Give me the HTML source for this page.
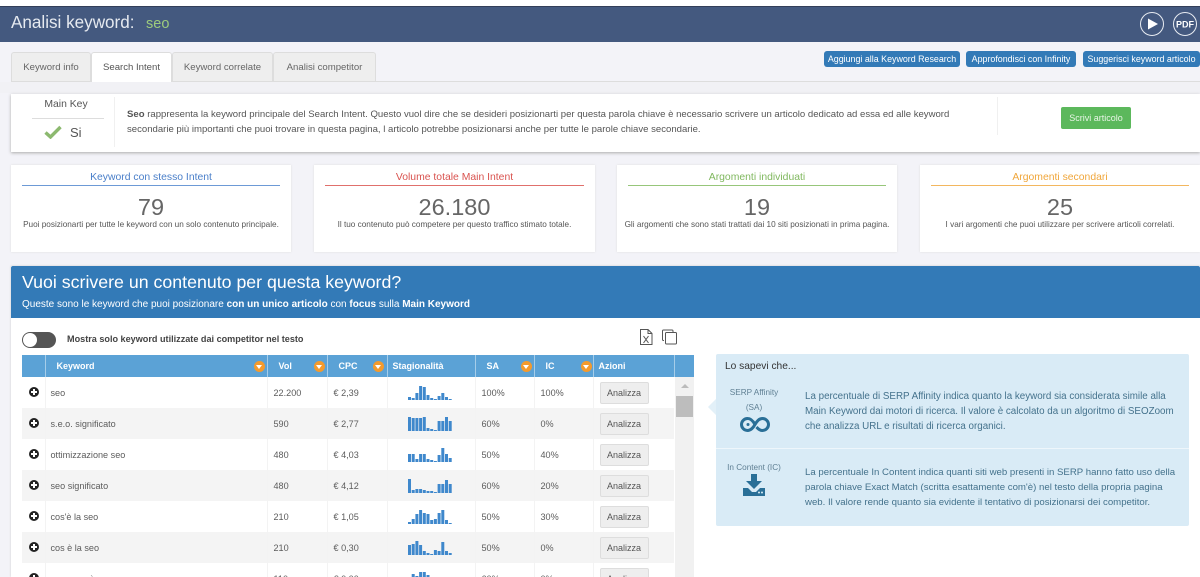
<!DOCTYPE html>
<html lang="it"><head><meta charset="utf-8"><title>Analisi keyword</title>
<style>
html,body{margin:0;padding:0;width:1200px;height:577px;overflow:hidden;background:#f3f3f8}
body{position:relative;font-family:"Liberation Sans",sans-serif;color:#555}
.a{position:absolute;white-space:nowrap}
.tab{position:absolute;top:52px;height:29px;line-height:30px;text-align:center;font-size:9.6px;color:#666;background:#eee;border:1px solid #ddd;border-bottom:0;box-sizing:border-box;border-radius:3px 3px 0 0}
.btn{position:absolute;top:51px;height:16px;line-height:16px;text-align:center;font-size:8.9px;color:#fff;background:#337ab7;border-radius:3px}
.card{position:absolute;top:165px;height:87px;width:280px;background:#fff;box-shadow:0 0 2px #ddd;text-align:center}
.card .t{position:absolute;left:11px;right:11px;top:6px;height:14px;line-height:13px;font-size:10.4px}
.card .l{position:absolute;left:11px;right:11px;top:20px;height:1px}
.card .n{position:absolute;left:0;right:0;top:29px;font-size:23.5px;line-height:26px;color:#666}
.card .d{position:absolute;left:0;right:0;top:54px;font-size:8.2px;line-height:11px;color:#555}
table{position:absolute;left:22px;top:355px;width:652px;border-collapse:collapse;table-layout:fixed;font-size:9.1px;color:#5c5c5c}
th{height:22px;padding:0 0 0 11px;background:#5ba2d6;color:#fff;text-align:left;font-size:9px;font-weight:bold;border-left:1px solid #a6cde9;box-sizing:border-box;position:relative}
th:first-child{border-left:0}
th i{position:absolute;top:6px;width:11px;height:11px;border-radius:50%;background:#f39a2d}
th i:after{content:"";position:absolute;left:2.5px;top:4px;border:3px solid transparent;border-top:4px solid #fff;border-bottom:0}
td{height:31px;padding:0 0 0 6px;box-sizing:border-box;border-left:1px solid #f3f3f3;white-space:nowrap}
td:first-child{border-left:0;padding:0 0 0 7px}
td.k{padding-left:5px}
td.g{padding-left:20px}
tr.s td{background:#f4f4f4}
td svg{display:block;transform:translateY(-1px)}
.an{display:block;width:49px;height:22px;line-height:21px;text-align:center;font-size:9px;color:#555;background:#eee;border:1px solid #ddd;border-radius:2px;box-sizing:border-box}
.pl{display:block;width:10px;height:10px;border-radius:50%;background:#222;position:relative;margin-top:-2px}
.pl:after{content:"";position:absolute;left:2px;top:4px;width:6px;height:2px;background:#fff}
.pl:before{content:"";position:absolute;left:4px;top:2px;width:2px;height:6px;background:#fff}
</style></head><body>
<div class="a" style="left:0;top:6px;width:1200px;height:36px;background:#44597f;border-top:1px solid #333f59;box-sizing:border-box"></div>
<div class="a" style="left:0;top:0;width:1200px;height:6px;background:#fff"></div>
<div class="a" style="left:11px;top:11px;font-size:17.1px;line-height:24px;color:#e6eaf0">Analisi keyword:</div>
<div class="a" style="left:146px;top:15px;font-size:14.5px;line-height:18px;color:#9ccb7d">seo</div>
<svg class="a" style="left:1139px;top:11px" width="60" height="26" viewBox="0 0 60 26">
<circle cx="13" cy="13" r="11.5" fill="none" stroke="#e8ecf2" stroke-width="1"/><path d="M9 7.5L19 13 9 18.5Z" fill="#fff"/>
<circle cx="46" cy="13" r="11.5" fill="none" stroke="#e8ecf2" stroke-width="1"/><text x="46" y="16.5" text-anchor="middle" font-family="Liberation Sans" font-weight="bold" font-size="9" fill="#fff">PDF</text></svg>

<div class="a" style="left:11px;top:81px;width:1189px;height:1px;background:#ddd"></div>
<div class="a" style="left:0;top:82px;width:1200px;height:11px;background:#f1f1f5"></div>
<div class="tab" style="left:11px;width:80px">Keyword info</div>
<div class="tab" style="left:91px;width:81px;background:#fff;height:30px;color:#555">Search Intent</div>
<div class="tab" style="left:172px;width:101px">Keyword correlate</div>
<div class="tab" style="left:273px;width:103px">Analisi competitor</div>
<div class="btn" style="left:824px;width:136px">Aggiungi alla Keyword Research</div>
<div class="btn" style="left:966px;width:110px">Approfondisci con Infinity</div>
<div class="btn" style="left:1083px;width:117px">Suggerisci keyword articolo</div>

<div class="a" style="left:11px;top:94px;width:1189px;height:58px;background:#fff;box-shadow:0 1px 3px #aaa"></div>
<div class="a" style="left:11px;top:98px;width:110px;text-align:center;font-size:10.4px;line-height:14px;color:#555">Main Key</div>
<div class="a" style="left:32px;top:118px;width:72px;height:1px;background:#ddd"></div>
<svg class="a" style="left:44px;top:125px" width="18" height="14" viewBox="0 0 18 14"><path d="M1.5 7.5L6.5 12 16.5 2" fill="none" stroke="#8cb96f" stroke-width="3.4"/></svg>
<div class="a" style="left:70px;top:125px;font-size:13px;line-height:16px;color:#555">Si</div>
<div class="a" style="left:114px;top:97px;width:1px;height:50px;background:#f0f0f0"></div>
<div class="a" style="left:127px;top:107px;font-size:9.57px;line-height:15px;color:#555"><b>Seo</b> rappresenta la keyword principale del Search Intent. Questo vuol dire che se desideri posizionarti per questa parola chiave è necessario scrivere un articolo dedicato ad essa ed alle keyword<br>secondarie più importanti che puoi trovare in questa pagina, l articolo potrebbe posizionarsi anche per tutte le parole chiave secondarie.</div>
<div class="a" style="left:997px;top:97px;width:1px;height:38px;background:#f0f0f0"></div>
<div class="a" style="left:1061px;top:107px;width:70px;height:22px;line-height:22px;text-align:center;font-size:9px;color:#e8f5e6;background:#5cb85c;border-radius:2px">Scrivi articolo</div>

<div class="card" style="left:11px"><div class="t" style="color:#4a7fc9">Keyword con stesso Intent</div><div class="l" style="background:#6d9ad6"></div><div class="n">79</div><div class="d">Puoi posizionarti per tutte le keyword con un solo contenuto principale.</div></div>
<div class="card" style="left:314px;width:281px"><div class="t" style="color:#d9534f">Volume totale Main Intent</div><div class="l" style="background:#e0706c"></div><div class="n">26.180</div><div class="d">Il tuo contenuto può competere per questo traffico stimato totale.</div></div>
<div class="card" style="left:617px"><div class="t" style="color:#80b85f">Argomenti individuati</div><div class="l" style="background:#97c67a"></div><div class="n">19</div><div class="d">Gli argomenti che sono stati trattati dai 10 siti posizionati in prima pagina.</div></div>
<div class="card" style="left:920px"><div class="t" style="color:#f0a63a">Argomenti secondari</div><div class="l" style="background:#f3b75f"></div><div class="n">25</div><div class="d">I vari argomenti che puoi utilizzare per scrivere articoli correlati.</div></div>

<div class="a" style="left:11px;top:266px;width:1189px;height:311px;background:#fff;box-shadow:0 0 2px #ccc"></div>
<div class="a" style="left:11px;top:266px;width:1189px;height:52px;background:#337ab7;border-radius:2px 2px 0 0"></div>
<div class="a" style="left:22px;top:271px;font-size:17.75px;line-height:22px;color:#fff">Vuoi scrivere un contenuto per questa keyword?</div>
<div class="a" style="left:22px;top:298px;font-size:10px;line-height:14px;color:#fff">Queste sono le keyword che puoi posizionare <b>con un unico articolo</b> con <b>focus</b> sulla <b>Main Keyword</b></div>

<div class="a" style="left:22px;top:332px;width:34px;height:16px;border-radius:8px;background:#555"></div>
<div class="a" style="left:23px;top:333px;width:14px;height:14px;border-radius:50%;background:#fff"></div>
<div class="a" style="left:67px;top:333px;font-size:9.1px;line-height:13px;font-weight:bold;color:#444">Mostra solo keyword utilizzate dai competitor nel testo</div>
<svg class="a" style="left:639px;top:328px" width="40" height="18" viewBox="0 0 40 18" fill="none" stroke="#555" stroke-width="1">
<path d="M1.5 1.5H9L13 5.5V16.5H1.5Z"/><path d="M9 1.5V5.5H13"/><path d="M4.5 8L9.5 15M9.5 8L4.5 15"/>
<path d="M25 12.5H24.500Q23.500 12.500 23.500 11.500V3Q23.500 2 24.500 2H33Q34 2 34 3V4"/><rect x="26.500" y="4.500" width="11" height="11.500" rx="1"/></svg>

<table>
<colgroup><col style="width:23px"><col style="width:222px"><col style="width:60px"><col style="width:60px"><col style="width:88px"><col style="width:59px"><col style="width:59px"><col style="width:81px"></colgroup>
<tr><th></th><th style="padding-left:11px">Keyword<i style="right:2px"></i></th><th>Vol<i style="right:2px"></i></th><th>CPC<i style="right:3px"></i></th><th style="padding-left:5px">Stagionalità</th><th style="padding-left:11px">SA<i style="right:2px"></i></th><th style="padding-left:11px">IC<i style="right:1px"></i></th><th style="padding-left:5px">Azioni</th></tr>
<tr><td><span class="pl"></span></td><td class="k">seo</td><td>22.200</td><td>€ 2,39</td><td class="g"><svg width="46" height="16" fill="#3f88cc"><path d="M0 13h3v3H0zM3.700 14h3v2h-3zM7.400 9h3v7h-3zM11.100 2h3v14h-3zM14.800 3h3v13h-3zM18.500 11h3v5h-3zM22.200 14h3v2h-3zM25.900 15h3v1h-3zM29.600 12h3v4h-3zM33.300 9h3v7h-3zM37 13h3v3h-3zM40.700 15h3v1h-3z"/></svg></td><td>100%</td><td>100%</td><td><span class="an">Analizza</span></td></tr>
<tr class="s"><td><span class="pl"></span></td><td class="k">s.e.o. significato</td><td>590</td><td>€ 2,77</td><td class="g"><svg width="46" height="16" fill="#3f88cc"><path d="M0 2h3v14H0zM3.700 3h3v13h-3zM7.400 3h3v13h-3zM11.100 3h3v13h-3zM14.800 2h3v14h-3zM18.500 13h3v3h-3zM22.200 14h3v2h-3zM25.900 15h3v1h-3zM29.600 6h3v10h-3zM33.300 6h3v10h-3zM37 2h3v14h-3zM40.700 6h3v10h-3z"/></svg></td><td>60%</td><td>0%</td><td><span class="an">Analizza</span></td></tr>
<tr><td><span class="pl"></span></td><td class="k">ottimizzazione seo</td><td>480</td><td>€ 4,03</td><td class="g"><svg width="46" height="16" fill="#3f88cc"><path d="M0 8h3v8H0zM3.700 8h3v8h-3zM7.400 13h3v3h-3zM11.100 8h3v8h-3zM14.800 8h3v8h-3zM18.500 13h3v3h-3zM22.200 14h3v2h-3zM25.900 15h3v1h-3zM29.600 9h3v7h-3zM33.300 2h3v14h-3zM37 8h3v8h-3zM40.700 12h3v4h-3z"/></svg></td><td>50%</td><td>40%</td><td><span class="an">Analizza</span></td></tr>
<tr class="s"><td><span class="pl"></span></td><td class="k">seo significato</td><td>480</td><td>€ 4,12</td><td class="g"><svg width="46" height="16" fill="#3f88cc"><path d="M0 2h3v14H0zM3.700 13h3v3h-3zM7.400 12h3v4h-3zM11.100 12h3v4h-3zM14.800 13h3v3h-3zM18.500 14h3v2h-3zM22.200 14h3v2h-3zM25.900 15h3v1h-3zM29.600 7h3v9h-3zM33.300 7h3v9h-3zM37 3h3v13h-3zM40.700 7h3v9h-3z"/></svg></td><td>60%</td><td>20%</td><td><span class="an">Analizza</span></td></tr>
<tr><td><span class="pl"></span></td><td class="k">cos'è la seo</td><td>210</td><td>€ 1,05</td><td class="g"><svg width="46" height="16" fill="#3f88cc"><path d="M0 14h3v2H0zM3.700 11h3v5h-3zM7.400 6h3v10h-3zM11.100 2h3v14h-3zM14.800 5h3v11h-3zM18.500 6h3v10h-3zM22.200 12h3v4h-3zM25.900 11h3v5h-3zM29.600 5h3v11h-3zM33.300 2h3v14h-3zM37 12h3v4h-3zM40.700 15h3v1h-3z"/></svg></td><td>50%</td><td>30%</td><td><span class="an">Analizza</span></td></tr>
<tr class="s"><td><span class="pl"></span></td><td class="k">cos è la seo</td><td>210</td><td>€ 0,30</td><td class="g"><svg width="46" height="16" fill="#3f88cc"><path d="M0 6h3v10H0zM3.700 5h3v11h-3zM7.400 2h3v14h-3zM11.100 6h3v10h-3zM14.800 12h3v4h-3zM18.500 14h3v2h-3zM22.200 15h3v1h-3zM25.900 11h3v5h-3zM29.600 12h3v4h-3zM33.300 3h3v13h-3zM37 12h3v4h-3zM40.700 14h3v2h-3z"/></svg></td><td>50%</td><td>0%</td><td><span class="an">Analizza</span></td></tr>
<tr><td><span class="pl"></span></td><td class="k">seo cosa è</td><td>110</td><td>€ 0,00</td><td class="g"><svg width="46" height="16" fill="#3f88cc"><path d="M0 7h3v9H0zM3.700 4h3v12h-3zM7.400 6h3v10h-3zM11.100 2h3v14h-3zM14.800 2h3v14h-3zM18.500 5h3v11h-3z"/></svg></td><td>60%</td><td>0%</td><td><span class="an">Analizza</span></td></tr>
</table>

<div class="a" style="left:674px;top:355px;width:20px;height:22px;background:#5ba2d6;border-left:1px solid #a6cde9;box-sizing:border-box"></div>
<div class="a" style="left:675px;top:377px;width:19px;height:200px;background:#f1f1f1"></div>
<div class="a" style="left:681px;top:384px;border:4px solid transparent;border-bottom:4px solid #bbb;border-top:0"></div>
<div class="a" style="left:676px;top:396px;width:17px;height:21px;background:#bdbdbd"></div>

<div class="a" style="left:716px;top:354px;width:473px;height:172px;background:#d9ebf6;border-radius:2px"></div>
<div class="a" style="left:708px;top:399px;border:8px solid transparent;border-right:8px solid #e2f0f8;border-left:0"></div>
<div class="a" style="left:725px;top:360px;font-size:10.2px;line-height:13px;color:#333">Lo sapevi che...</div>
<div class="a" style="left:716px;top:448px;width:473px;height:1px;background:#eef6fb"></div>
<div class="a" style="left:716px;top:385px;width:76px;text-align:center;font-size:8.2px;line-height:15px;color:#5f7f93">SERP Affinity<br>(SA)</div>
<svg class="a" style="left:740px;top:416px" width="30" height="17" viewBox="0 0 30 17" fill="none" stroke="#2a6f97" stroke-width="3"><path d="M15 8.500C12 3 9.500 2.500 7.500 2.500A6 6 0 0 0 7.500 14.500C11 14.500 13 12 15 8.500C17 5 19 2.500 22.500 2.500A6 6 0 0 1 22.500 14.500C19 14.500 17.500 12 16.500 11"/><circle cx="8" cy="8.500" r="1.500" fill="#2a6f97" stroke="none"/></svg>
<div class="a" style="left:716px;top:462px;width:76px;text-align:center;font-size:8.2px;line-height:11px;color:#5f7f93">In Content (IC)</div>
<svg class="a" style="left:743px;top:474px" width="23" height="22" viewBox="0 0 23 22" fill="#2a6f97"><path d="M8 0h6v7h5l-8 8-8-8h5z"/><path d="M0 14h5l4 4h4l4-4h5v8H0z"/><circle cx="16" cy="18.500" r="1" fill="#d9ebf6"/><circle cx="19" cy="18.500" r="1" fill="#d9ebf6"/></svg>
<div class="a" style="left:805px;top:389px;font-size:9.8px;line-height:15px;color:#44728c">La percentuale di SERP Affinity indica quanto la keyword sia considerata simile alla<br>Main Keyword dai motori di ricerca. Il valore è calcolato da un algoritmo di SEOZoom<br>che analizza URL e risultati di ricerca organici.</div>
<div class="a" style="left:805px;top:465px;font-size:9.63px;line-height:15px;color:#44728c">La percentuale In Content indica quanti siti web presenti in SERP hanno fatto uso della<br>parola chiave Exact Match (scritta esattamente com'è) nel testo della propria pagina<br>web. Il valore rende quanto sia evidente il tentativo di posizionarsi dei competitor.</div>
</body></html>
